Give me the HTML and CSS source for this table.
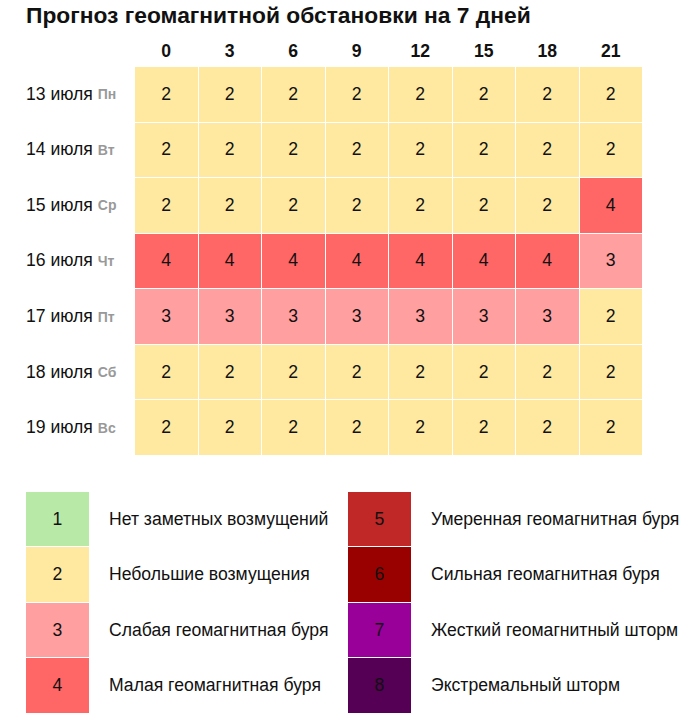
FILE: index.html
```html
<!DOCTYPE html>
<html lang="ru">
<head>
<meta charset="utf-8">
<link rel="stylesheet" href="styles.css">
</head>
<body>
<div class="page">
  <h1 class="title">Прогноз геомагнитной обстановки на 7 дней</h1>
  <div class="grid">
    <div class="corner"></div>
    <div class="hour">0</div><div class="hour">3</div><div class="hour">6</div><div class="hour">9</div><div class="hour">12</div><div class="hour">15</div><div class="hour">18</div><div class="hour">21</div>

    <div class="day">13 июля <span class="wd">Пн</span></div>
    <div class="c k2">2</div><div class="c k2">2</div><div class="c k2">2</div><div class="c k2">2</div><div class="c k2">2</div><div class="c k2">2</div><div class="c k2">2</div><div class="c k2">2</div>

    <div class="day">14 июля <span class="wd">Вт</span></div>
    <div class="c k2">2</div><div class="c k2">2</div><div class="c k2">2</div><div class="c k2">2</div><div class="c k2">2</div><div class="c k2">2</div><div class="c k2">2</div><div class="c k2">2</div>

    <div class="day">15 июля <span class="wd">Ср</span></div>
    <div class="c k2">2</div><div class="c k2">2</div><div class="c k2">2</div><div class="c k2">2</div><div class="c k2">2</div><div class="c k2">2</div><div class="c k2">2</div><div class="c k4">4</div>

    <div class="day">16 июля <span class="wd">Чт</span></div>
    <div class="c k4">4</div><div class="c k4">4</div><div class="c k4">4</div><div class="c k4">4</div><div class="c k4">4</div><div class="c k4">4</div><div class="c k4">4</div><div class="c k3">3</div>

    <div class="day">17 июля <span class="wd">Пт</span></div>
    <div class="c k3">3</div><div class="c k3">3</div><div class="c k3">3</div><div class="c k3">3</div><div class="c k3">3</div><div class="c k3">3</div><div class="c k3">3</div><div class="c k2">2</div>

    <div class="day">18 июля <span class="wd">Сб</span></div>
    <div class="c k2">2</div><div class="c k2">2</div><div class="c k2">2</div><div class="c k2">2</div><div class="c k2">2</div><div class="c k2">2</div><div class="c k2">2</div><div class="c k2">2</div>

    <div class="day">19 июля <span class="wd">Вс</span></div>
    <div class="c k2">2</div><div class="c k2">2</div><div class="c k2">2</div><div class="c k2">2</div><div class="c k2">2</div><div class="c k2">2</div><div class="c k2">2</div><div class="c k2">2</div>
  </div>

  <div class="legend">
    <div class="lcol">
      <div class="item"><div class="sw k1">1</div><div class="lbl">Нет заметных возмущений</div></div>
      <div class="item"><div class="sw k2">2</div><div class="lbl">Небольшие возмущения</div></div>
      <div class="item"><div class="sw k3">3</div><div class="lbl">Слабая геомагнитная буря</div></div>
      <div class="item"><div class="sw k4">4</div><div class="lbl">Малая геомагнитная буря</div></div>
    </div>
    <div class="lcol">
      <div class="item"><div class="sw k5">5</div><div class="lbl">Умеренная геомагнитная буря</div></div>
      <div class="item"><div class="sw k6">6</div><div class="lbl">Сильная геомагнитная буря</div></div>
      <div class="item"><div class="sw k7">7</div><div class="lbl">Жесткий геомагнитный шторм</div></div>
      <div class="item"><div class="sw k8">8</div><div class="lbl">Экстремальный шторм</div></div>
    </div>
  </div>
</div>
</body>
</html>
```

FILE: styles.css
```css
html, body {
  margin: 0;
  padding: 0;
  background: #fff;
}
body {
  font-family: "Liberation Sans", Arial, sans-serif;
  color: #111;
}
.page {
  padding: 2px 0 0 26px;
}
.title {
  margin: 0;
  font-size: 22.8px;
  line-height: 26px;
  font-weight: bold;
  color: #111;
  white-space: nowrap;
}
.grid {
  display: grid;
  grid-template-columns: 108px repeat(8, 62.5px);
  grid-template-rows: 38px repeat(7, 54.57px);
  gap: 1px;
}
.hour {
  display: flex;
  align-items: flex-end;
  justify-content: center;
  font-weight: bold;
  font-size: 17.6px;
  line-height: 20px;
  padding-bottom: 5px;
}
.day {
  display: flex;
  align-items: center;
  font-size: 17.6px;
  white-space: pre;
}
.wd {
  font-size: 14px;
  font-weight: bold;
  color: #999;
}
.c {
  display: flex;
  align-items: center;
  justify-content: center;
  font-size: 17.6px;
}
.k1 { background: #b9e9a7; }
.k2 { background: #ffe9a1; }
.k3 { background: #ff9f9f; }
.k4 { background: #ff6666; }
.k5 { background: #c02727; }
.k6 { background: #990000; }
.k7 { background: #990099; }
.k8 { background: #550055; }

.legend {
  display: flex;
  margin-top: 37px;
}
.lcol {
  width: 322px;
  flex-shrink: 0;
  display: flex;
  flex-direction: column;
  gap: 1px;
}
.item {
  display: flex;
  align-items: center;
  height: 54.5px;
}
.sw {
  width: 63px;
  flex-shrink: 0;
  height: 100%;
  display: flex;
  align-items: center;
  justify-content: center;
  font-size: 17.6px;
}
.lbl {
  margin-left: 20px;
  font-size: 17.6px;
  white-space: nowrap;
}
```
